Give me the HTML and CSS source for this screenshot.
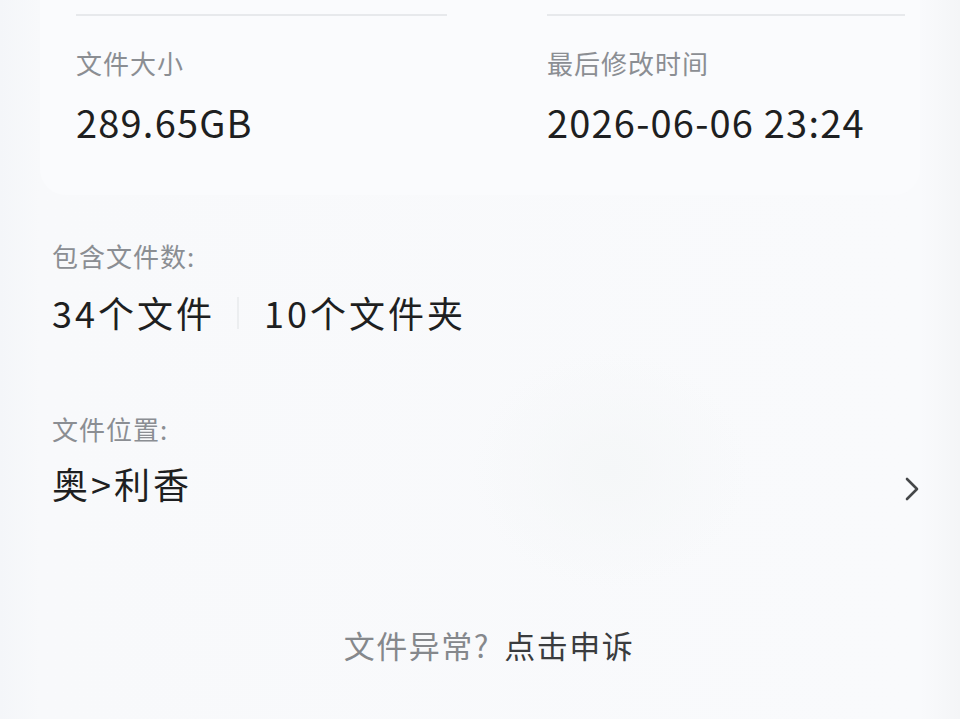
FILE: index.html
```html
<!DOCTYPE html>
<html lang="zh-CN">
<head>
<meta charset="utf-8">
<title>文件详情</title>
<link rel="stylesheet" href="styles.css">
</head>
<body>
<div class="page">
  <section class="card">
    <div class="col">
      <div class="divider"></div>
      <div class="label">文件大小</div>
      <div class="value">289.65GB</div>
    </div>
    <div class="col">
      <div class="divider"></div>
      <div class="label">最后修改时间</div>
      <div class="value">2026-06-06 23:24</div>
    </div>
  </section>

  <section class="block count">
    <div class="label">包含文件数:</div>
    <div class="big-row">
      <span class="big">34个文件</span>
      <span class="sep"></span>
      <span class="big">10个文件夹</span>
    </div>
  </section>

  <section class="block location">
    <div class="label">文件位置:</div>
    <div class="big-row path-row">
      <span class="big">奥&gt;利香</span>
      <svg class="chevron" width="16" height="26" viewBox="0 0 16 26" aria-hidden="true">
        <path d="M3 3 L13 13 L3 23" fill="none" stroke="#454749" stroke-width="2.6" stroke-linecap="round" stroke-linejoin="round"/>
      </svg>
    </div>
  </section>

  <footer class="appeal">
    <span class="muted">文件异常?</span>
    <span class="link">点击申诉</span>
  </footer>
</div>
</body>
</html>
```

FILE: styles.css
```css
html, body {
  margin: 0;
  padding: 0;
}

body {
  width: 960px;
  height: 719px;
  overflow: hidden;
  background: #f6f8fa;
  font-family: "Noto Sans CJK SC", "Noto Sans", sans-serif;
  color: #1f2022;
}

.page {
  display: flex;
  flex-direction: column;
  height: 719px;
  background:
    radial-gradient(ellipse 140px 120px at 610px 470px, #f5f7f8 0%, rgba(245,247,248,0) 100%),
    linear-gradient(90deg, #f4f6f9 0px, #f8f9fb 40px, #f9fafc 920px, #f4f5f7 960px);
}

.card {
  margin: 0 40px;
  padding: 0 35px 0 36px;
  height: 195px;
  box-sizing: border-box;
  background: #fafbfd;
  border-radius: 0 0 26px 26px;
  display: grid;
  grid-template-columns: 371px 358px;
  column-gap: 100px;
}

.col {
  display: flex;
  flex-direction: column;
}

.divider {
  height: 2px;
  margin-top: 14px;
  background: #e7e9ec;
}

.label {
  font-size: 26px;
  line-height: 34px;
  color: #8b8e93;
  letter-spacing: 1px;
}

.col .label {
  margin-top: 30px;
}

.value {
  margin-top: 20px;
  font-size: 38px;
  line-height: 44px;
  color: #1e1f21;
  letter-spacing: 1.2px;
}

.block {
  padding: 0 40px 0 52px;
}

.count {
  margin-top: 44px;
}

.big-row {
  display: flex;
  align-items: center;
  margin-top: 16px;
}

.big {
  font-size: 36px;
  line-height: 46px;
  color: #1e1f21;
  letter-spacing: 3px;
}

.sep {
  width: 2px;
  height: 32px;
  background: #eceef0;
  margin: 2px 25px 0 22px;
}

.location {
  margin-top: 77px;
}

.path-row {
  justify-content: space-between;
  margin-top: 14px;
}

.chevron {
  margin-top: 12px;
}

.appeal {
  margin-top: auto;
  margin-bottom: 54px;
  padding-left: 18px;
  text-align: center;
  font-size: 31px;
  line-height: 40px;
  letter-spacing: 1.5px;
}

.muted {
  color: #85888c;
}

.link {
  color: #3a3c3e;
  margin-left: 6px;
}
```
